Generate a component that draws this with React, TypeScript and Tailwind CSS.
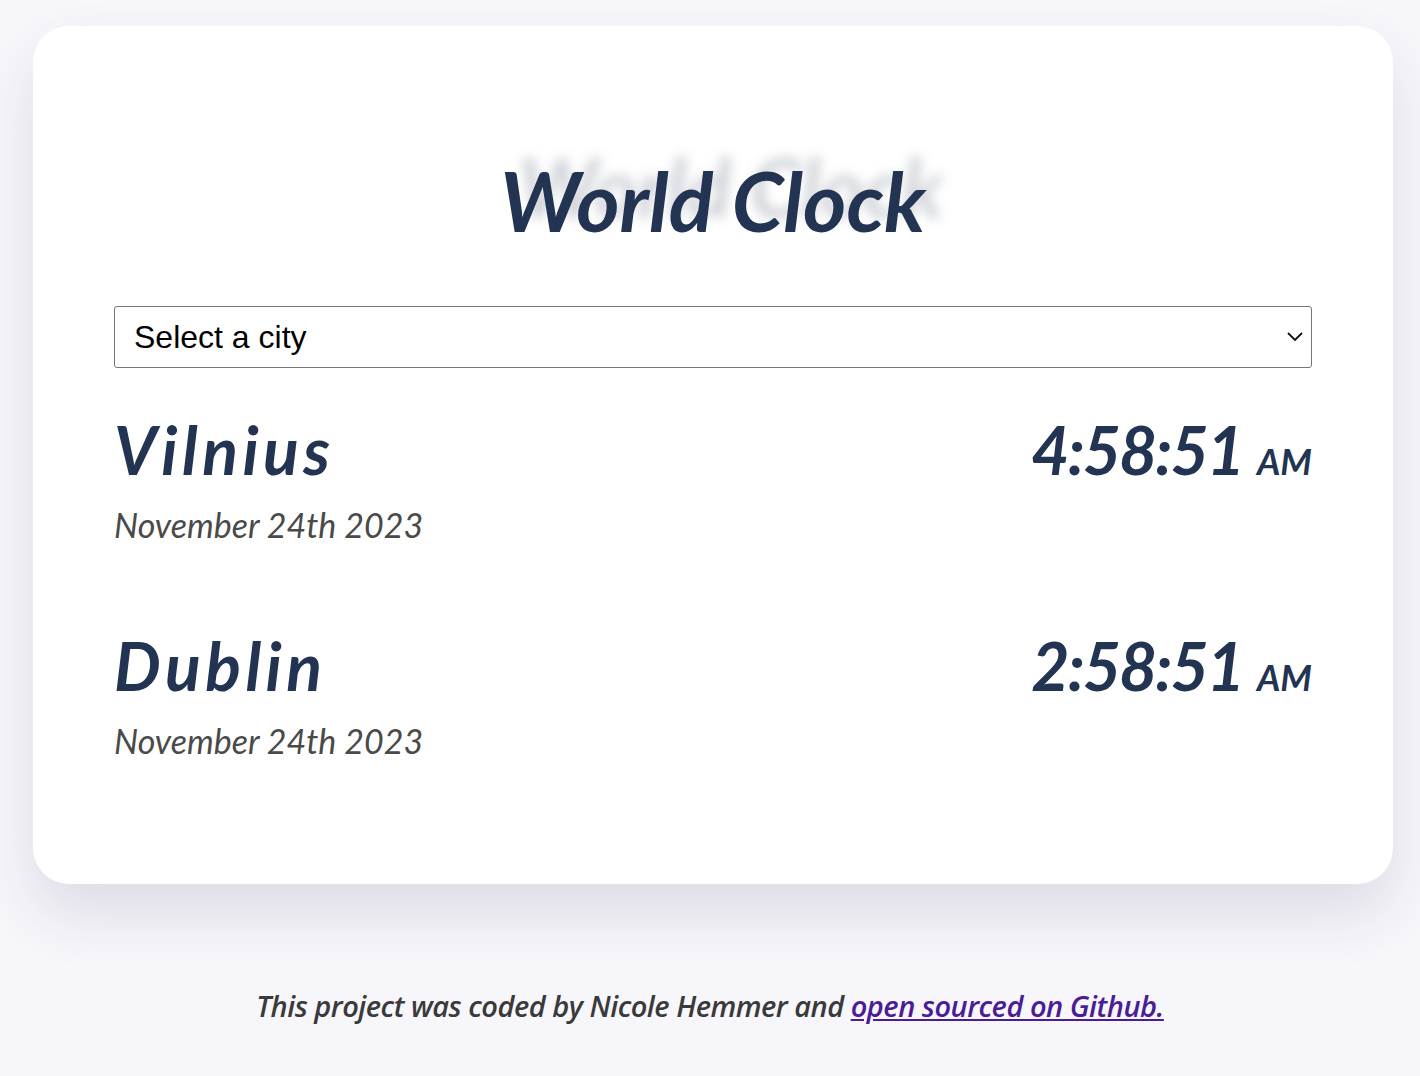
export default function App() {
  const cities = [
    { name: "Vilnius", date: "November 24th 2023", time: "4:58:51" },
    { name: "Dublin", date: "November 24th 2023", time: "2:58:51" },
  ];

  return (
    <div className="min-h-[1076px] bg-[#f7f6fb] pt-[26px] pl-[33px] font-['Lato',sans-serif]">
      <div className="w-[1360px] bg-white rounded-[36px] shadow-[0_30px_60px_rgba(40,40,80,0.12)] px-[81px] pt-[132px] pb-[123px]">
        <h1 className="text-center text-[83px] leading-[84px] font-bold italic text-[#233452] [text-shadow:18px_-14px_12px_rgba(60,70,90,0.25)]">
          World Clock
        </h1>
        <div className="mt-[64px] relative">
          <select className="w-full h-[62px] appearance-none border border-[#767676] rounded-[3px] bg-white pl-[19px] text-[32px] text-black font-['Liberation_Sans',sans-serif]">
            <option>Select a city</option>
          </select>
          <svg
            className="absolute right-[8px] top-[24px] pointer-events-none"
            width="18"
            height="12"
            viewBox="0 0 18 12"
          >
            <path d="M2 3l7 7 7-7" fill="none" stroke="#111" strokeWidth="1.8" />
          </svg>
        </div>
        <div className="mt-[40px] flex flex-col gap-[79px]">
          {cities.map((c) => (
            <div key={c.name} className="flex justify-between items-start">
              <div>
                <div className="text-[66px] leading-[84px] font-bold italic tracking-[4.5px] text-[#233452]">
                  {c.name}
                </div>
                <div className="mt-[13px] text-[34px] leading-[40px] italic text-[#4a4a4a]">
                  {c.date}
                </div>
              </div>
              <div className="flex items-baseline text-[#233452] font-bold italic">
                <span className="text-[66px] leading-[84px] tracking-[-2px]">{c.time}</span>
                <span className="ml-[14px] text-[36px]">AM</span>
              </div>
            </div>
          ))}
        </div>
      </div>
      <p className="mt-[100px] -ml-[33px] text-center text-[29px] italic font-semibold text-[#3a3a3a] font-['Open_Sans',sans-serif] tracking-[-0.5px]">
        This project was coded by Nicole Hemmer and{" "}
        <a href="#" className="text-[#4a1d96] underline">
          open sourced on Github.
        </a>
      </p>
    </div>
  );
}
